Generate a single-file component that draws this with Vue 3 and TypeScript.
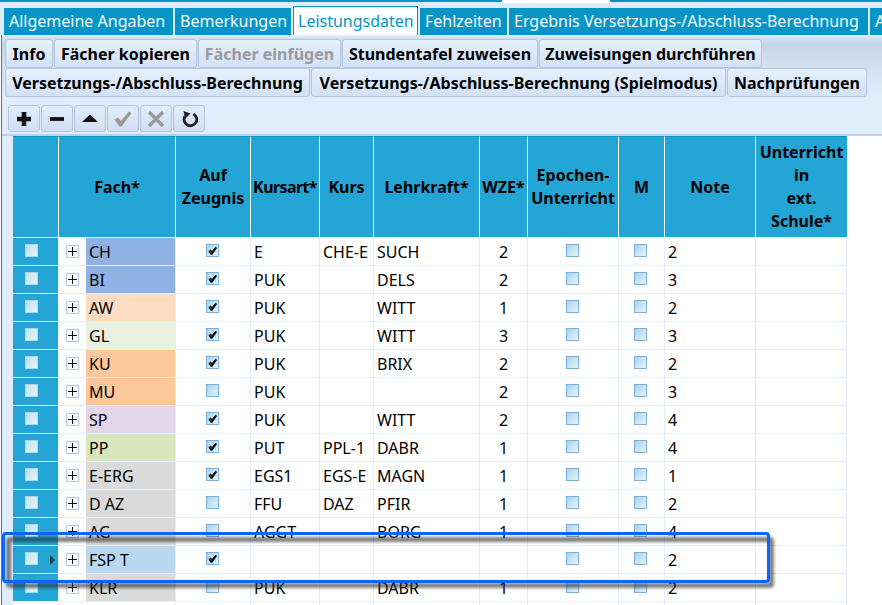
<script setup lang="ts">
interface Row {
  fach: string; color: string; z: boolean; art: string; kurs: string; lehr: string; wze: string; note: string; cur?: boolean
}
const tabs = [
  { t: 'Allgemeine Angaben', w: 169 },
  { t: 'Bemerkungen', w: 116 },
  { t: 'Leistungsdaten', w: 125, active: true },
  { t: 'Fehlzeiten', w: 87 },
  { t: 'Ergebnis Versetzungs-/Abschluss-Berechnung', w: 359 },
  { t: 'A', w: 30 }
]
const bar1 = [
  { t: 'Info', w: 48 },
  { t: 'Fächer kopieren', w: 143 },
  { t: 'Fächer einfügen', w: 143, off: true },
  { t: 'Stundentafel zuweisen', w: 196 },
  { t: 'Zuweisungen durchführen', w: 223 }
]
const bar2 = [
  { t: 'Versetzungs-/Abschluss-Berechnung', w: 305 },
  { t: 'Versetzungs-/Abschluss-Berechnung (Spielmodus)', w: 415 },
  { t: 'Nachprüfungen', w: 140 }
]
const rows: Row[] = [
  { fach: 'CH', color: '#8db1e2', z: true, art: 'E', kurs: 'CHE-E', lehr: 'SUCH', wze: '2', note: '2' },
  { fach: 'BI', color: '#8db1e2', z: true, art: 'PUK', kurs: '', lehr: 'DELS', wze: '2', note: '3' },
  { fach: 'AW', color: '#fddcc2', z: true, art: 'PUK', kurs: '', lehr: 'WITT', wze: '1', note: '2' },
  { fach: 'GL', color: '#e9f0de', z: true, art: 'PUK', kurs: '', lehr: 'WITT', wze: '3', note: '3' },
  { fach: 'KU', color: '#fdc79c', z: true, art: 'PUK', kurs: '', lehr: 'BRIX', wze: '2', note: '2' },
  { fach: 'MU', color: '#fdc79c', z: false, art: 'PUK', kurs: '', lehr: '', wze: '2', note: '3' },
  { fach: 'SP', color: '#e3d6e8', z: true, art: 'PUK', kurs: '', lehr: 'WITT', wze: '2', note: '4' },
  { fach: 'PP', color: '#d9e5bd', z: true, art: 'PUT', kurs: 'PPL-1', lehr: 'DABR', wze: '1', note: '4' },
  { fach: 'E-ERG', color: '#dadada', z: true, art: 'EGS1', kurs: 'EGS-E', lehr: 'MAGN', wze: '1', note: '1' },
  { fach: 'D AZ', color: '#dadada', z: false, art: 'FFU', kurs: 'DAZ', lehr: 'PFIR', wze: '1', note: '2' },
  { fach: 'AG', color: '#dadada', z: false, art: 'AGGT', kurs: '', lehr: 'BORG', wze: '1', note: '4' },
  { fach: 'FSP T', color: '#b9d7ee', z: true, art: '', kurs: '', lehr: '', wze: '', note: '2', cur: true },
  { fach: 'KLR', color: '#dadada', z: false, art: 'PUK', kurs: '', lehr: 'DABR', wze: '1', note: '2' }
]
</script>

<template>
  <div class="page">
    <div class="topline"><span class="topgap"></span></div>
    <nav class="tabs">
      <div
        v-for="tab in tabs"
        :key="tab.t"
        class="tab"
        :class="{ active: tab.active }"
        :style="{ width: tab.w + 'px' }"
      >{{ tab.t }}</div>
    </nav>
    <main class="panel">
      <section class="bars">
        <div class="bar">
          <button
            v-for="b in bar1"
            :key="b.t"
            class="btn"
            :class="{ off: b.off }"
            :style="{ width: b.w + 'px' }"
          >{{ b.t }}</button>
        </div>
        <div class="bar">
          <button
            v-for="b in bar2"
            :key="b.t"
            class="btn"
            :style="{ width: b.w + 'px' }"
          >{{ b.t }}</button>
        </div>
      </section>
      <div class="tools">
        <button class="tool" aria-label="Neu">
          <svg viewBox="0 0 18 18"><path d="M9 2v14M2 9h14" stroke="#111" stroke-width="4.6" /></svg>
        </button>
        <button class="tool" aria-label="Entfernen">
          <svg viewBox="0 0 18 18"><path d="M2 9h14" stroke="#111" stroke-width="3.8" /></svg>
        </button>
        <button class="tool" aria-label="Hoch">
          <svg viewBox="0 0 18 18"><path d="M1 12 9 4.500 17 12z" fill="#111" /></svg>
        </button>
        <button class="tool" aria-label="Speichern">
          <svg viewBox="0 0 18 18"><path d="M0.500 9.500 4 7.500 6.800 11 15 1.500l2.500 1.500L7.500 16.500h-2z" fill="#999" /></svg>
        </button>
        <button class="tool" aria-label="Abbrechen">
          <svg viewBox="0 0 18 18"><path d="M2 2l14 14M16 2 2 16" stroke="#999" stroke-width="3.200" /></svg>
        </button>
        <button class="tool" aria-label="Neu laden">
          <svg viewBox="0 0 18 18"><path d="M4.800 6.500a6.300 6.300 0 1 0 8.600-2.600" fill="none" stroke="#222" stroke-width="2.800" /><path d="M3.500 1 10.500 3.500 5 9z" fill="#222" /></svg>
        </button>
      </div>
      <div class="gridwrap">
        <div class="grid">
          <div class="hd"></div>
          <div class="hd">Fach*</div>
          <div class="hd">Auf<br />Zeugnis</div>
          <div class="hd tight">Kursart*</div>
          <div class="hd">Kurs</div>
          <div class="hd">Lehrkraft*</div>
          <div class="hd">WZE*</div>
          <div class="hd">Epochen-<br />Unterricht</div>
          <div class="hd">M</div>
          <div class="hd">Note</div>
          <div class="hd">Unterricht<br />in<br />ext.<br />Schule*</div>

          <template v-for="r in rows" :key="r.fach">
            <div class="sel">
              <span class="chk"></span>
              <span v-if="r.cur" class="arrow"></span>
            </div>
            <div class="fach">
              <span class="exp"><span class="plus"></span></span>
              <span class="name" :style="{ background: r.color }">{{ r.fach }}</span>
            </div>
            <div class="c center"><span class="chk" :class="{ on: r.z }">
              <svg v-if="r.z" viewBox="0 0 12 12"><path d="M1.500 6.500 4.200 4.800 5.300 6.500 9.500 2 11 3.200 5.800 10.500H4z" fill="#111" /></svg>
            </span></div>
            <div class="c">{{ r.art }}</div>
            <div class="c">{{ r.kurs }}</div>
            <div class="c">{{ r.lehr }}</div>
            <div class="c mid">{{ r.wze }}</div>
            <div class="c center"><span class="chk"></span></div>
            <div class="c center"><span class="chk"></span></div>
            <div class="c note">{{ r.note }}</div>
            <div class="c"></div>
          </template>
          <div v-for="n in 11" :key="n" class="c"></div>
        </div>
      </div>
    </main>
    <div class="mark-shadow"></div>
    <div class="mark"></div>
  </div>
</template>

<style>
html, body { margin: 0; background: #fff; overflow: hidden; }
</style>

<style scoped>
.page {
  position: relative;
  width: 882px;
  height: 605px;
  overflow: hidden;
  background: #fff;
  font-family: "Noto Sans", "Open Sans", sans-serif;
  font-size: 16px;
  color: #000;
}
.topline {
  position: relative;
  height: 6px;
  box-sizing: border-box;
  border-top: 2px solid #0795c8;
  background: #dcecfa;
}
.topgap {
  position: absolute;
  left: 502px;
  top: -2px;
  width: 108px;
  height: 3px;
  background: #fff;
}
.tabs {
  display: flex;
  align-items: flex-end;
  gap: 2px;
  height: 29px;
  padding-left: 4px;
  width: 900px;
  background: #dcecfa;
}
.tab {
  flex: none;
  box-sizing: border-box;
  height: 27px;
  line-height: 26px;
  padding-left: 5px;
  background: #0795c8;
  color: #f4fbfe;
  white-space: nowrap;
  overflow: hidden;
}
.tab.active {
  height: 29px;
  line-height: 28px;
  padding-left: 4px;
  background: #fff;
  color: #0795c8;
  border: 1px solid #0795c8;
  border-bottom: none;
}
.panel {
  margin-left: 1px;
  border-left: 1px solid #0795c8;
  background: #e0ecfb;
  height: 570px;
  padding-top: 2px;
  box-sizing: border-box;
}
.bars {
  height: 60px;
  padding: 2px 0 0 3px;
  box-sizing: border-box;
  background: linear-gradient(#d5e2f1, #c6d7ea 12%, #e0ecfb 100%);
}
.bar {
  display: flex;
  gap: 1px;
  height: 29px;
}
.btn {
  flex: none;
  box-sizing: border-box;
  height: 29px;
  padding: 0;
  border: 1px solid #b3c5de;
  border-radius: 3px;
  background: linear-gradient(#e6f0fc, #d2e1f5);
  font: 700 16px "Noto Sans", "Open Sans", sans-serif;
  color: #000;
  white-space: nowrap;
}
.btn.off { color: #9a9a9a; }
.tools {
  display: flex;
  gap: 1px;
  height: 37px;
  padding: 8px 0 0 6px;
  box-sizing: border-box;
}
.tool {
  flex: none;
  box-sizing: border-box;
  width: 32px;
  height: 27px;
  padding: 0;
  display: flex;
  align-items: center;
  justify-content: center;
  border: 1px solid #b3c5de;
  border-radius: 3px;
  background: linear-gradient(#e2edfb, #cfdff3);
}
.tool svg { width: 18px; height: 18px; }
.gridwrap {
  height: 471px;
  border-top: 2px solid #b5d3ec;
  padding-left: 11px;
  box-sizing: border-box;
  background: linear-gradient(90deg, #e0ecfb 11px, #fff 11px);
}
.grid {
  display: grid;
  grid-template-columns: 46px 117px 75px 69px 54px 106px 48px 91px 46px 91px 91px;
  grid-template-rows: 101px repeat(14, 28px);
  background: #fff;
  width: 834px;
  height: 469px;
  overflow: hidden;
}
.hd {
  box-sizing: border-box;
  background: #23a5d6;
  border-right: 1px solid #f2f9fd;
  border-top: 1px solid #0795c8;
  display: flex;
  align-items: center;
  justify-content: center;
  text-align: center;
  font-weight: 700;
  line-height: 23px;
  white-space: nowrap;
  height: 101px;
}
.hd:nth-child(11) { border-right: none; }
.hd.tight { letter-spacing: -0.6px; }
.sel {
  position: relative;
  box-sizing: border-box;
  background: #23a5d6;
  border-top: 1px solid #dcebf7;
  border-right: 1px solid #f2f9fd;
  display: flex;
  align-items: center;
  padding-left: 12px;
}
.chk {
  display: block;
  box-sizing: border-box;
  width: 13px;
  height: 13px;
  border: 1px solid #7ab1dc;
  background: linear-gradient(135deg, #a8d3ee, #e6f3fa);
  margin-top: -3px;
}
.sel .chk { border-color: #b7d6ec; background: linear-gradient(135deg, #bcdff2, #eaf5fb); }
.chk svg { display: block; width: 11px; height: 11px; }
.arrow {
  position: absolute;
  left: 37px;
  top: 9px;
  border-left: 5px solid #2a3a4c;
  border-top: 5px solid transparent;
  border-bottom: 5px solid transparent;
}
.fach {
  box-sizing: border-box;
  display: flex;
  align-items: stretch;
  border-top: 1px solid #e3edfa;
  border-right: 1px solid #e3edfa;
  min-width: 0;
}
.exp {
  flex: none;
  width: 27px;
  display: flex;
  align-items: center;
  padding-left: 7px;
  box-sizing: border-box;
}
.plus {
  display: block;
  box-sizing: border-box;
  width: 13px;
  height: 13px;
  border: 1px solid #b5cbe2;
  background:
    linear-gradient(#111, #111) center / 9px 1px no-repeat,
    linear-gradient(#111, #111) center / 1px 9px no-repeat,
    #fff;
}
.name {
  flex: 1;
  padding-left: 3px;
  line-height: 29px;
}
.c {
  box-sizing: border-box;
  border-top: 1px solid #e3edfa;
  border-right: 1px solid #e3edfa;
  line-height: 29px;
  padding-left: 3px;
  white-space: nowrap;
  overflow: hidden;
}
.center { display: flex; align-items: center; justify-content: center; padding-left: 0; padding-right: 2px; }
.mid { text-align: center; padding-left: 0; }
.mark,
.mark-shadow {
  position: absolute;
  left: 2px;
  top: 532px;
  width: 768px;
  height: 51px;
  box-sizing: border-box;
  border-radius: 4px;
}
.mark {
  border: 3.5px solid #0a64f5;
}
.mark-shadow {
  left: 6px;
  top: 537px;
  border: 5px solid rgba(40, 40, 40, 0.6);
  filter: blur(1.5px);
}
</style>
